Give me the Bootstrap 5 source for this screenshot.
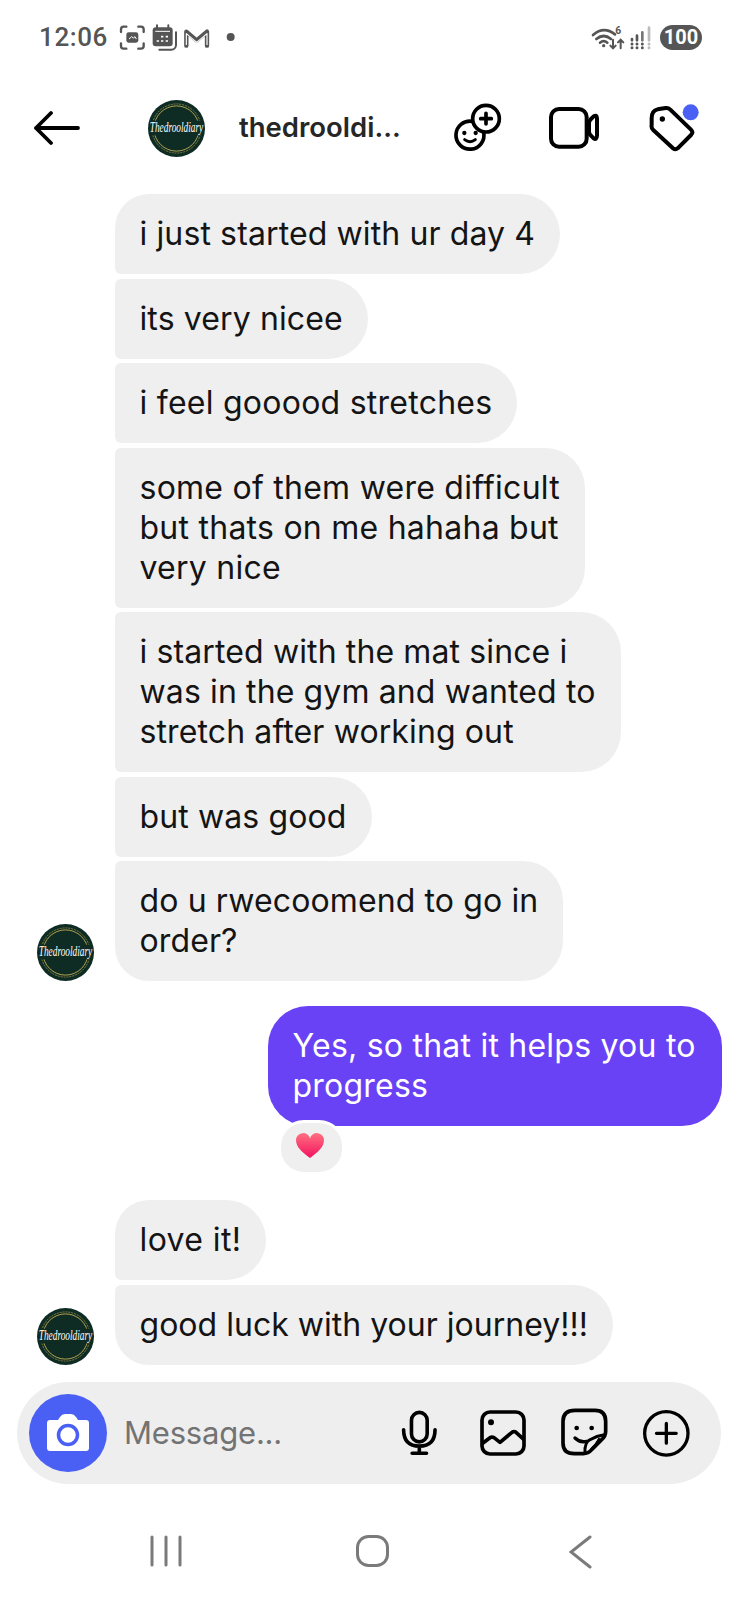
<!DOCTYPE html>
<html lang="en">
<head>
<meta charset="utf-8">
<title>thedrooldiary</title>
<link href="https://cdn.jsdelivr.net/npm/bootstrap@5.3.0/dist/css/bootstrap.min.css" rel="stylesheet">
<style>
html,body{margin:0;background:#fff}
.phone{width:738px;height:1599px;overflow:hidden;font-family:Inter,"Noto Sans",sans-serif;color:#141414;background:#fff}
.phone>*{flex:none}
.statusbar{height:74px;padding:0 36px 0 39px;color:#555}
.clock{font:500 26px/1 Roboto,sans-serif;letter-spacing:.6px;width:76px}
.batt{width:42px;height:25px;background:#555;color:#fff;font:700 20px/1 Roboto,sans-serif}
.chathead{height:108px;padding-left:34px}
.chathead svg{display:block;flex:none}
.peer{font:600 27.5px/1 Inter,sans-serif;color:#262626;width:163px;margin-left:34px;margin-right:44px;white-space:nowrap}
.thread{padding:12px 16px 0 37px;height:1200px}
.msgrow{margin-bottom:4.5px}
.avatar-slot{width:58px;flex:none;margin-right:20px}
.bubble{background:#efefef;font-size:32px;line-height:40px;padding:20px 25px 20px 24.500px;border-radius:6px 40px 40px 6px;width:fit-content;letter-spacing:.12px}
.first{border-top-left-radius:34px}
.last{border-bottom-left-radius:34px}
.airy{letter-spacing:.25px}
.airier{letter-spacing:.4px}
.snug{letter-spacing:.02px}
.mine{background:#6a42f6;color:#fff;border-radius:40px;margin-left:231px;letter-spacing:.23px;padding-right:26px}
.reaction{width:61px;height:49px;background:#efefef;border:3px solid #fff;box-sizing:content-box;border-radius:26px;margin:-6px 0 0 241px;position:relative}
.composer{height:102px;margin:0 17px;background:#eee;border-radius:51px;padding:0 0 0 12px}
.shutter{width:78px;height:78px;background:#4a60f5;flex:none}
.hint{font-size:31px;color:#737373;margin-left:17px;width:277px;letter-spacing:-.2px}
.sysnav{height:115px;padding-top:51px;padding-left:150px}
</style>
</head>
<body>
<div class="phone d-flex flex-column">
  <div class="statusbar d-flex align-items-center">
    <span class="clock">12:06</span>
    <svg width="130" height="45" viewBox="0 0 390 135" fill="none" stroke="#555" stroke-width="7"><path d="M34 35h-8a8 8 0 0 0-8 8v8M70 35h8a8 8 0 0 1 8 8v8M34 101h-8a8 8 0 0 1-8-8v-8M70 101h8a8 8 0 0 0 8-8v-8" stroke-linecap="round"/><rect x="34" y="52" width="36" height="31" rx="7" fill="#555" stroke="none"/><path d="M42 72l8-7 5 4 5-4 4 7" stroke="#fff" stroke-width="3"/><rect x="113" y="37" width="60" height="57" rx="9" fill="#555" stroke="none"/><path d="M126 31v10M160 31v10" stroke-linecap="round" stroke-width="6"/><path d="M183 52v38a14 14 0 0 1-14 14h-36" stroke-linecap="round" stroke-width="6"/><path d="M121 49h44" stroke="#fff" stroke-width="3"/><path d="M138 65h7M152 65h7M125 78h7M138 78h7M152 78h7" stroke="#fff" stroke-width="5"/><path d="M214 92V50L245 76L276 50V92" stroke-width="13" stroke-linejoin="round" stroke-linecap="round"/><path d="M214 90V56L245 82L276 56V90" stroke="#fff" stroke-width="3.500" stroke-linejoin="round"/><circle cx="347" cy="66" r="12" fill="#555" stroke="none"/></svg>
    <svg class="ms-auto" width="75" height="45" viewBox="0 0 225 135" fill="none" stroke="#555" stroke-width="8" stroke-linecap="round"><path d="M24 60q32-28 66-2M34 72q22-18 44 0M45 83q11-9 22 0"/><circle cx="56" cy="92" r="5" fill="#555" stroke="none"/><path d="M84 74v26M76 92l8 8 8-8M107 100V74M99 82l8-8 8 8" stroke-width="6"/><text x="91" y="58" font-family="Roboto,sans-serif" font-size="31" font-weight="700" fill="#555" stroke="none">6</text><path d="M141 72v4M156 62v14" stroke-width="8"/><path d="M172 52v24" stroke="#777" stroke-width="8"/><path d="M192 38v38" stroke="#bbb" stroke-width="8"/><path d="M141 87v0M141 98v0M156 87v0M156 98v0M172 87v0M172 98v0" stroke-width="9"/><path d="M192 87v0M192 98v0" stroke="#bbb" stroke-width="9"/></svg>
    <span class="batt d-inline-flex align-items-center justify-content-center rounded-pill">100</span>
  </div>

  <div class="chathead d-flex align-items-center">
    <svg width="46" height="36" viewBox="0 0 46 36" fill="none" stroke="#000" stroke-width="3.800" stroke-linecap="round" stroke-linejoin="round"><path d="M2 18h42M17 3 2 18l15 15"/></svg>
    <svg style="margin-left:68px" width="57" height="57" viewBox="0 0 58 58"><circle cx="29" cy="29" r="29" fill="#0e2c24"/><circle cx="29" cy="29" r="23" fill="none" stroke="#b3a24e" stroke-width="1"/><circle cx="29" cy="29" r="25" fill="none" stroke="#b3a24e" stroke-width=".7" stroke-dasharray="2 1"/><rect x="3" y="21" width="52" height="15" fill="#0e2c24"/><text transform="translate(29 33) scale(1 1.450)" text-anchor="middle" font-family="Liberation Serif,serif" font-style="italic" font-size="9.500" fill="#fff">Thedrooldiary</text></svg>
    <span class="peer">thedrooldi...</span>
    <svg width="65" height="60" viewBox="0 0 195 180" fill="none" stroke="#000" stroke-width="11" stroke-linecap="round"><circle cx="120" cy="62" r="40"/><path d="M78 70A42 42 0 1 0 113 103"/><path d="M120 46v32M104 62h32" stroke-width="11"/><circle cx="55" cy="105" r="6.500" fill="#000" stroke="none"/><circle cx="89" cy="105" r="6.500" fill="#000" stroke="none"/><path d="M56 125q16 12 32 0" stroke-width="9"/></svg>
    <svg style="margin-left:38px" width="50" height="42" viewBox="540 320 150 126" fill="none" stroke="#000" stroke-width="12" stroke-linejoin="round"><rect x="546" y="326" width="107" height="113" rx="24"/><path d="M660 368q0-6 6-12l8-8q9-6 10 6v52q-1 14-10 8l-8-8q-6-6-6-12z"/></svg>
    <svg style="margin-left:50px" width="50" height="50" viewBox="840 305 150 150" fill="none"><path d="M848 350q0-22 18-26l24-4q8-1 14 5l62 60q8 8 0 16l-40 40q-6 5-14 0l-60-56q-6-6-4-14z" stroke="#000" stroke-width="12" stroke-linejoin="round"/><circle cx="880" cy="353" r="8" fill="#000"/><circle cx="965" cy="333" r="24" fill="#4a60f5"/></svg>
  </div>

  <div class="thread">
    <div class="msgrow d-flex align-items-end"><div class="avatar-slot"></div><div class="bubble first">i just started with ur day 4</div></div>
    <div class="msgrow d-flex align-items-end"><div class="avatar-slot"></div><div class="bubble">its very nicee</div></div>
    <div class="msgrow d-flex align-items-end"><div class="avatar-slot"></div><div class="bubble airy">i feel gooood stretches</div></div>
    <div class="msgrow d-flex align-items-end"><div class="avatar-slot"></div><div class="bubble airy">some of them were difficult<br>but thats on me hahaha but<br>very nice</div></div>
    <div class="msgrow d-flex align-items-end"><div class="avatar-slot"></div><div class="bubble">i started with the mat since i<br>was in the gym and wanted to<br>stretch after working out</div></div>
    <div class="msgrow d-flex align-items-end"><div class="avatar-slot"></div><div class="bubble">but was good</div></div>
    <div class="msgrow d-flex align-items-end" style="margin-bottom:25px">
      <div class="avatar-slot"><svg class="d-block" width="57" height="57" viewBox="0 0 58 58"><circle cx="29" cy="29" r="29" fill="#0e2c24"/><circle cx="29" cy="29" r="23" fill="none" stroke="#b3a24e" stroke-width="1"/><circle cx="29" cy="29" r="25" fill="none" stroke="#b3a24e" stroke-width=".7" stroke-dasharray="2 1"/><rect x="3" y="21" width="52" height="15" fill="#0e2c24"/><text transform="translate(29 33) scale(1 1.450)" text-anchor="middle" font-family="Liberation Serif,serif" font-style="italic" font-size="9.500" fill="#fff">Thedrooldiary</text></svg></div>
      <div class="bubble last">do u rwecoomend to go in<br>order?</div>
    </div>
    <div class="bubble mine">Yes, so that it helps you to<br>progress</div>
    <div class="reaction d-flex align-items-center justify-content-center">
      <svg class="me-1 mb-1" width="28" height="26" viewBox="0 0 30 28"><defs><linearGradient id="hg" x1="0" y1="0" x2="0" y2="1"><stop offset="0" stop-color="#ff7080"/><stop offset="1" stop-color="#f3125e"/></linearGradient></defs><path d="M15 27C6 20 0 15 0 8a7.600 7.600 0 0 1 15-2 7.600 7.600 0 0 1 15 2c0 7-6 12-15 19z" fill="url(#hg)"/></svg>
    </div>
    <div class="msgrow d-flex align-items-end" style="margin-top:25px"><div class="avatar-slot"></div><div class="bubble first airier">love it!</div></div>
    <div class="d-flex align-items-end">
      <div class="avatar-slot"><svg class="d-block" width="57" height="57" viewBox="0 0 58 58"><circle cx="29" cy="29" r="29" fill="#0e2c24"/><circle cx="29" cy="29" r="23" fill="none" stroke="#b3a24e" stroke-width="1"/><circle cx="29" cy="29" r="25" fill="none" stroke="#b3a24e" stroke-width=".7" stroke-dasharray="2 1"/><rect x="3" y="21" width="52" height="15" fill="#0e2c24"/><text transform="translate(29 33) scale(1 1.450)" text-anchor="middle" font-family="Liberation Serif,serif" font-style="italic" font-size="9.500" fill="#fff">Thedrooldiary</text></svg></div>
      <div class="bubble last snug">good luck with your journey!!!</div>
    </div>
  </div>

  <div class="composer d-flex align-items-center">
    <div class="shutter rounded-circle d-flex align-items-center justify-content-center">
      <svg width="42" height="38" viewBox="0 0 42 38"><path d="M3 6h8l2-3q2-3 5-3h6q3 0 5 3l2 3h8q3 0 3 3v25q0 3-3 3H3q-3 0-3-3V9q0-3 3-3z" fill="#fff"/><circle cx="21" cy="21" r="9.500" fill="none" stroke="#4a60f5" stroke-width="3.500"/></svg>
    </div>
    <span class="hint">Message...</span>
    <svg width="36" height="46" viewBox="98 155 110 140" fill="none" stroke="#000" stroke-width="11" stroke-linecap="round"><rect x="130" y="162" width="48" height="90" rx="24"/><path d="M106 215q0 50 48 50t48-50M154 267v20M132 287h44"/></svg>
    <svg style="margin-left:43px" width="46" height="46" viewBox="332 155 138 138" fill="none" stroke="#000" stroke-width="11" stroke-linejoin="round"><rect x="338" y="161" width="126" height="126" rx="24"/><circle cx="365" cy="192" r="9" fill="#000" stroke="none"/><path d="M338 256l24-18q6-3 12 0l18 14 36-30q6-4 12 0l24 22"/></svg>
    <svg style="margin-left:28.500px" width="65" height="60" viewBox="0 0 195 180" fill="none" stroke="#000" stroke-width="11" stroke-linecap="round" stroke-linejoin="round"><path d="M60 22H120Q152 22 152 55V85Q152 100 140 110L110 140Q100 152 85 152H58Q24 152 24 120V55Q24 22 60 22Z"/><path d="M90 150Q88 118 105 110Q125 98 148 95" stroke-width="9"/><path d="M108 140Q122 128 132 108" stroke-width="7"/><circle cx="65" cy="75" r="7" fill="#000" stroke="none"/><circle cx="110" cy="75" r="7" fill="#000" stroke="none"/><path d="M60 105Q75 120 95 115" stroke-width="10"/></svg>
    <svg style="margin-left:23.500px" width="47" height="47" viewBox="820 153 143 143" fill="none" stroke="#000" stroke-width="10" stroke-linecap="round"><circle cx="891" cy="224" r="66"/><path d="M891 194v60M861 224h60" stroke-width="10"/></svg>
  </div>

  <div class="sysnav d-flex align-items-start">
    <svg width="32" height="32" viewBox="0 0 32 32" stroke="#7a7a7a" stroke-width="3" stroke-linecap="round"><path d="M2 2v28M16 2v28M30 2v28"/></svg>
    <svg style="margin-left:174px" width="34" height="33" viewBox="0 0 34 33" fill="none" stroke="#7a7a7a" stroke-width="3"><rect x="1.500" y="1.500" width="30" height="29" rx="11"/></svg>
    <svg style="margin-left:179px" width="24" height="34" viewBox="0 0 24 34" fill="none" stroke="#7a7a7a" stroke-width="3" stroke-linecap="round"><path d="M21 2 2 17l19 15"/></svg>
  </div>
</div>
<script src="https://cdn.jsdelivr.net/npm/bootstrap@5.3.0/dist/js/bootstrap.bundle.min.js"></script>
</body>
</html>
